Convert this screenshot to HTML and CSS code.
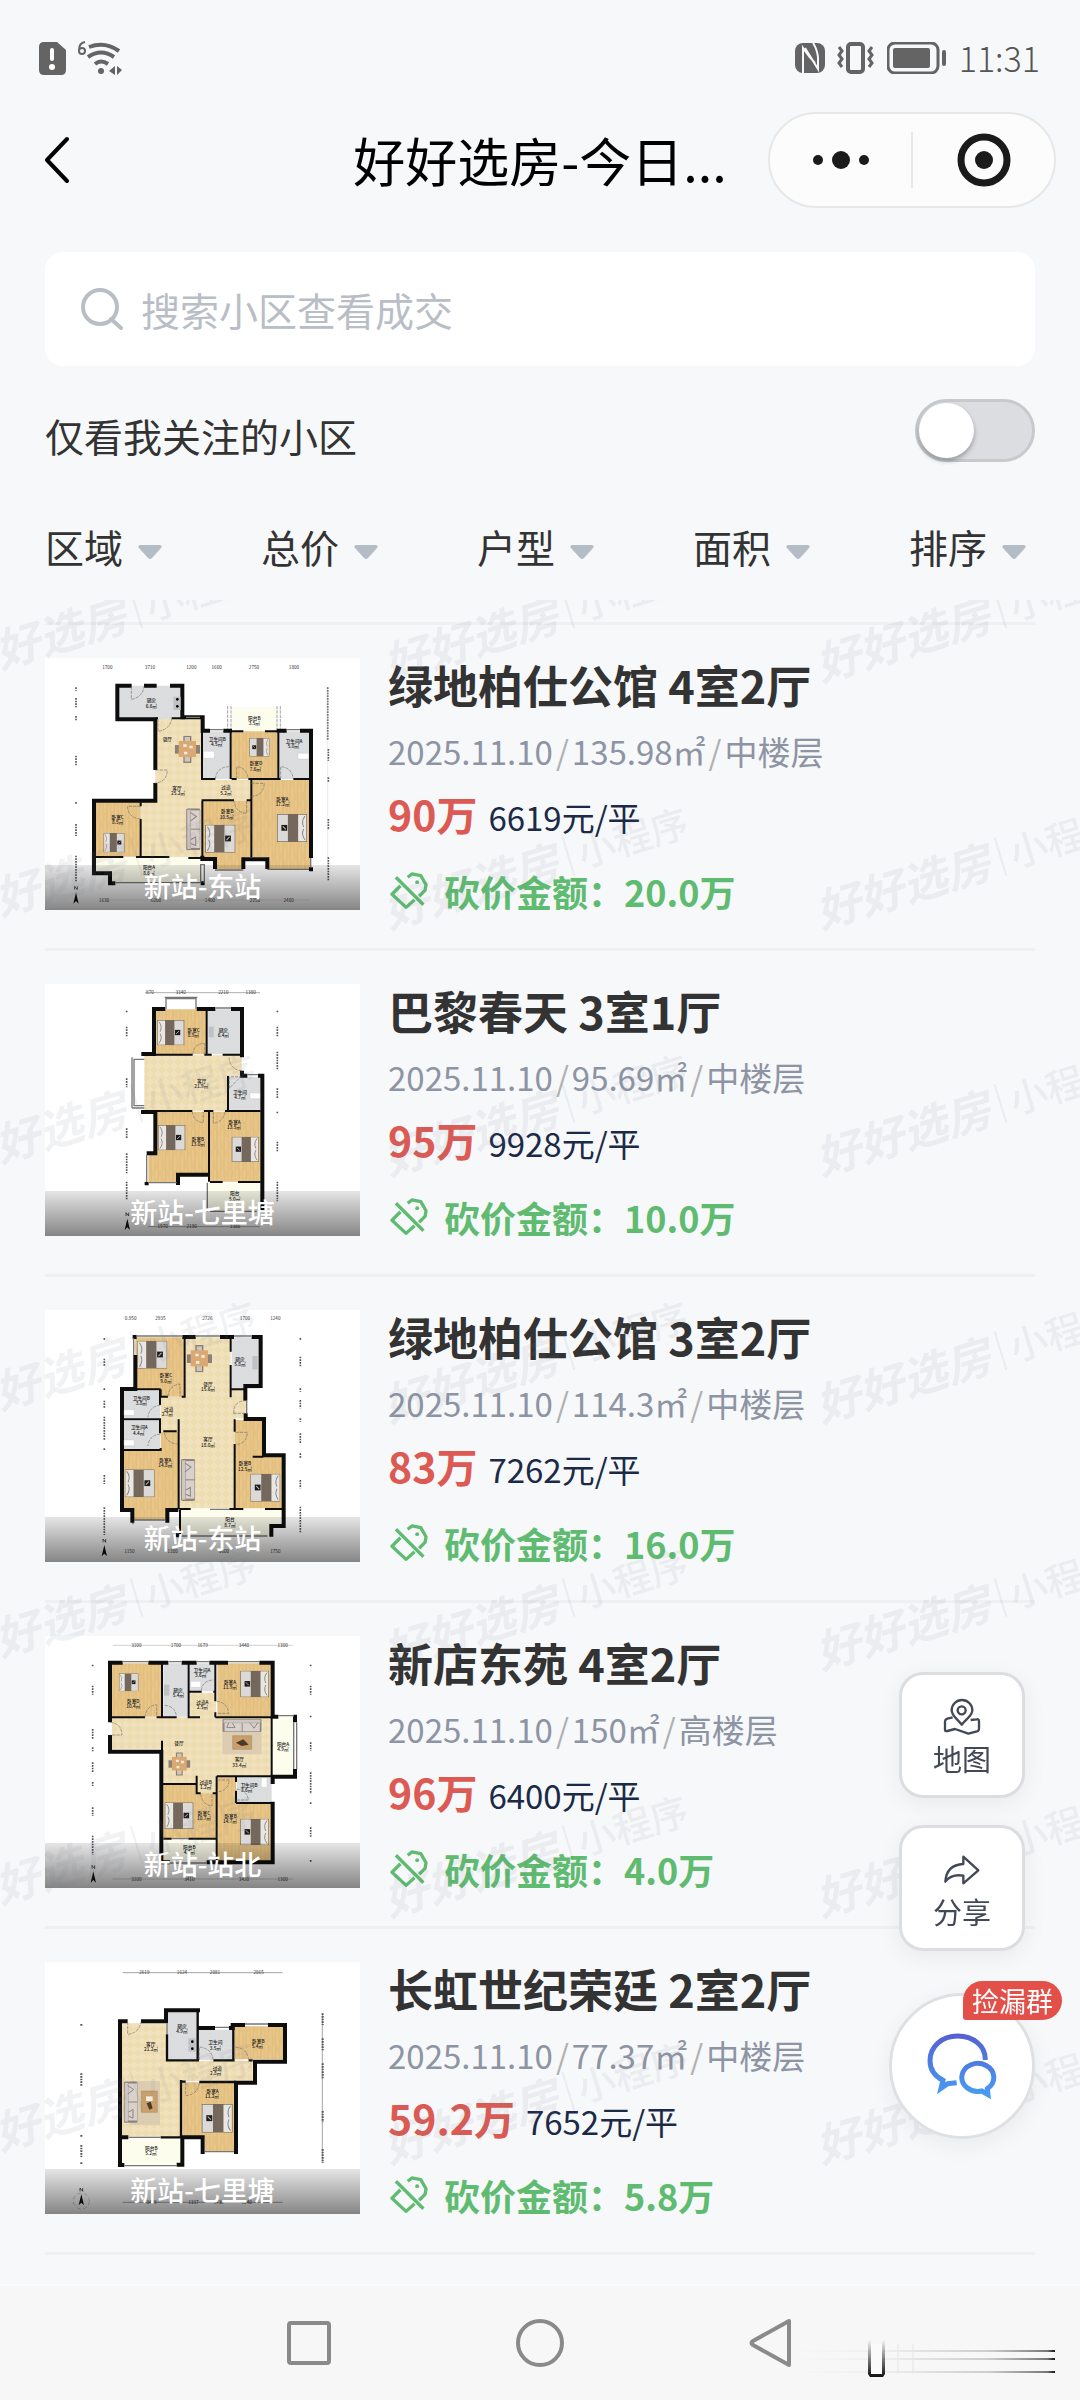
FILE: index.html
```html
<!DOCTYPE html>
<html lang="zh-CN">
<head>
<meta charset="utf-8">
<meta name="viewport" content="width=device-width, initial-scale=1">
<title>好好选房</title>
<link rel="stylesheet" href="styles.css">
</head>
<body>
<svg class="defs" width="0" height="0" aria-hidden="true">
  <defs>
    <pattern id="wood" width="22" height="60" patternUnits="userSpaceOnUse"><rect width="22" height="60" fill="#e6c384"/><path d="M0 0V60M11 0V60" stroke="#dcb672" stroke-width="2"/><path d="M5 0V34M16 20V60" stroke="#edcf98" stroke-width="2"/></pattern>
    <pattern id="tile" width="12" height="12" patternUnits="userSpaceOnUse"><rect width="12" height="12" fill="#dcdddf"/><path d="M0 0H12M0 0V12" stroke="#cfd1d4"/></pattern>
    <pattern id="stone" width="24" height="24" patternUnits="userSpaceOnUse"><rect width="24" height="24" fill="#f1e2bd"/><path d="M0 12L12 0L24 12L12 24Z" fill="#eedcb1"/></pattern>
    <linearGradient id="chat" x1="0" y1="1190" x2="0" y2="1385" gradientUnits="userSpaceOnUse"><stop offset="0" stop-color="#5560d2"/><stop offset="1" stop-color="#46a0f5"/></linearGradient>
  </defs>
  <symbol id="bed" viewBox="0 0 88 82"><rect width="88" height="82" fill="#74675c"/><rect x="2" y="2" width="24" height="78" fill="#e9e7e4"/><path d="M6 6Q18 20 10 38M6 76Q18 60 10 44" stroke="#8d8983" stroke-width="3" fill="none"/><rect x="56" y="2" width="30" height="78" fill="#dcdad8"/><rect x="58" y="32" width="17" height="17" fill="#1d1b1a"/><path d="M62 45L71 36" stroke="#bbb" stroke-width="3"/></symbol>
  <symbol id="sofa" viewBox="0 0 42 124"><rect width="42" height="124" rx="5" fill="#8f8580"/><rect x="3" y="4" width="10" height="116" fill="#cfc7c2"/><rect x="14" y="6" width="26" height="54" fill="#d9d1cc"/><rect x="14" y="63" width="26" height="54" fill="#d9d1cc"/><path d="M12 12L30 24L12 38M14 92L28 84L28 110L14 104" stroke="#8d8480" stroke-width="3" fill="none"/></symbol>
  <symbol id="dining" viewBox="0 0 76 82"><rect x="26" y="0" width="24" height="82" fill="#8c8176"/><rect x="0" y="28" width="76" height="26" fill="#8c8176"/><rect x="30" y="4" width="16" height="74" fill="#cfc5b8"/><rect x="12" y="16" width="52" height="48" fill="#d9a971"/><path d="M26 26h10v8h-10zM44 30h10v8h-10zM28 48h10v8h-10z" fill="#f4ede2"/></symbol>
  <symbol id="compass" viewBox="0 0 20 60"><path d="M10 20L18 54L10 46L2 54Z" fill="#111"/><path d="M6 12V2L14 12V2" fill="none" stroke="#111" stroke-width="2"/></symbol>
  <symbol id="cut" viewBox="58 696 116 116"><path d="M112 712L125 702L152 707L168 735L165 752L147 770M90 738L64 764L107 804L133 781M76 712L160 796" fill="none" stroke="#5fbb70" stroke-width="10" stroke-linejoin="round"/><circle cx="141" cy="727" r="6" fill="#5fbb70"/></symbol>
  <symbol id="arrow" viewBox="0 0 24 14"><path d="M2 0H22Q25 1 23 3L14 13Q12 15 10 13L1 3Q-1 1 2 0Z" fill="#b4bdc5"/></symbol>
</svg>

<div class="status">
  <div class="status-group">
    <svg width="27" height="33" viewBox="0 0 27 33"><path d="M5 0H18L27 8V28Q27 33 22 33H5Q0 33 0 28V5Q0 0 5 0Z" fill="#646464"/><path d="M13 8V17" stroke="#fff" stroke-width="4" stroke-linecap="round"/><circle cx="13" cy="25" r="3" fill="#fff"/></svg>
    <svg width="46" height="34" viewBox="0 0 46 34"><g fill="none" stroke="#646464"><path d="M7 1Q1 2 1 9M1 10a3 3 0 1 0 6 0a3 3 0 1 0-6 0" stroke-width="2"/><path d="M11 6Q27 0 41 10M10 16Q23 7 36 16M17 23Q23 18 30 23" stroke-width="4"/></g><circle cx="23" cy="30" r="3" fill="#646464"/><path d="M37 25V34L31 30ZM39 25V34L44 29Z" fill="#646464"/></svg>
  </div>
  <div class="status-group">
    <svg width="30" height="30" viewBox="0 0 30 30"><rect width="30" height="30" rx="8" fill="#646464"/><path d="M8 30V5Q14 14 20 20M10 5L23 26V14Q22 6 18 0" fill="none" stroke="#f7f8fa" stroke-width="2"/></svg>
    <svg width="38" height="32" viewBox="0 0 38 32"><rect x="11" y="2" width="15" height="28" rx="3" fill="none" stroke="#646464" stroke-width="4"/><path d="M2 5L5 9L2 13L5 17L2 21L5 25M35 5L32 9L35 13L32 17L35 21L32 25" fill="none" stroke="#646464" stroke-width="3"/></svg>
    <svg width="60" height="32" viewBox="0 0 60 32"><rect x="1" y="1" width="50" height="30" rx="7" fill="none" stroke="#646464" stroke-width="3"/><rect x="6" y="6" width="37" height="20" rx="2" fill="#646464"/><path d="M57 10V22" stroke="#646464" stroke-width="4" stroke-linecap="round"/></svg>
    <span class="clock">11:31</span>
  </div>
</div>

<header class="titlebar">
  <button class="back" aria-label="返回"><svg width="26" height="48" viewBox="0 0 26 48"><path d="M23 3L3 24L23 45" fill="none" stroke="#000" stroke-width="4" stroke-linecap="round" stroke-linejoin="round"/></svg></button>
  <h1>好好选房-今日...</h1>
  <div class="capsule">
    <button aria-label="更多"><svg width="58" height="20" viewBox="0 0 58 20" fill="#1b1b1b"><circle cx="6" cy="10" r="5"/><circle cx="29" cy="10" r="9"/><circle cx="52" cy="10" r="5"/></svg></button>
    <button aria-label="关闭"><svg width="54" height="54" viewBox="0 0 54 54"><circle cx="27" cy="27" r="23" fill="none" stroke="#1b1b1b" stroke-width="7"/><circle cx="27" cy="27" r="9" fill="#1b1b1b"/></svg></button>
  </div>
</header>

<main>
  <label class="search">
    <svg width="42" height="42" viewBox="0 0 42 42" fill="none" stroke="#b9bec6" stroke-width="4"><circle cx="19" cy="19" r="17"/><path d="M30 31L40 40" stroke-linecap="round"/></svg>
    <input type="search" placeholder="搜索小区查看成交" aria-label="搜索小区查看成交">
  </label>
  <div class="follow">
    <label for="only">仅看我关注的小区</label>
    <input id="only" class="switch" type="checkbox" role="switch">
  </div>
  <div class="filters">
    <label><select aria-label="区域"><option>区域</option></select><svg width="24" height="14"><use href="#arrow"/></svg></label>
    <label><select aria-label="总价"><option>总价</option></select><svg width="24" height="14"><use href="#arrow"/></svg></label>
    <label><select aria-label="户型"><option>户型</option></select><svg width="24" height="14"><use href="#arrow"/></svg></label>
    <label><select aria-label="面积"><option>面积</option></select><svg width="24" height="14"><use href="#arrow"/></svg></label>
    <label><select aria-label="排序"><option>排序</option></select><svg width="24" height="14"><use href="#arrow"/></svg></label>
  </div>

  <section class="results">
    <ul class="list">
      <li class="item">
        <figure class="thumb">
          <svg viewBox="45 52 945 756" class="plan">
            <path d="M262 135H458V235H262Z" fill="url(#tile)"/><path d="M376 235H515V418H662V480H515V650H332V482H376Z" fill="url(#stone)"/>
            <path d="M518 272H602V415H518ZM746 272H840V415H746Z" fill="url(#tile)"/><path d="M605 200H743V272H605ZM197 650H517V725H240V695H197Z" fill="#fcfdec"/>
            <path d="M605 272H743V415H605ZM664 418H842V685H712V650H664ZM517 480H662V650H645V685H555V650H517ZM197 485H332V648H197Z" fill="url(#wood)"/>
            <path d="M262 241V135H305M342 135H380M420 135H457V230H518V270H540M257 236H376V388M376 427V480H192V698H240V728H256M580 270H606M740 270H770M810 270H843V652M517 645V655H555V685M640 685V656H712V685M837 686H849M512 728H524" fill="none" stroke="#0d0d0d" stroke-width="12"/>
            <path d="M376 233H384M425 233H466M516 270V415H556M602 270V415M605 415H620M655 415H745V275M745 415H752M790 415H840M664 418V650M517 480V650M515 479H612M650 479H664M332 485V497M332 535V648M192 649H280M318 649H418M475 652H520M605 272H640M705 272H745" fill="none" stroke="#0d0d0d" stroke-width="6"/>
            <path d="M256 726H512V672H523V728M555 688H640M712 686H837M842 652V680M468 230H510M540 267H580M770 267H810" fill="none" stroke="#777" stroke-width="4"/>
            <path d="M304 137V176Q338 170 342 137M384 235V272Q420 266 425 235M376 388H412Q410 425 376 427M556 415Q560 380 596 378M620 415V378Q650 380 655 415M752 415V378Q785 380 790 415M664 428H703Q700 465 664 467M332 497H292Q295 532 332 535M650 480V518Q616 516 612 480M593 196V265M603 196V265M741 196V265M751 196V265" fill="none" stroke="#777" stroke-width="2" stroke-dasharray="10 3"/>
            <use href="#dining" x="434" y="285" width="76" height="82"/><use href="#sofa" x="468" y="503" width="44" height="126"/><use href="#bed" x="525" y="552" width="92" height="84"/>
            <use href="#bed" transform="translate(832 520) scale(-1 1)" width="92" height="84"/><use href="#bed" x="203" y="577" width="98" height="58"/><use href="#bed" transform="translate(738 292) scale(-1 1)" width="100" height="56"/>
            <path d="M521 332H553V353H521ZM804 338H836V355H804Z" fill="#fff" stroke="#bbb"/><path d="M430 168H452V208H430Z" fill="#bfc1c4"/><circle cx="442" cy="176" r="4"/><circle cx="442" cy="197" r="4"/>
            <g class="room"><text x="364" y="184">厨房</text><text x="364" y="201">6.6㎡</text><text x="412" y="302">餐厅</text><text x="441" y="447">客厅</text><text x="444" y="464">25.2㎡</text><text x="588" y="445">过道</text><text x="588" y="462">5.2㎡</text><text x="673" y="237">阳台B</text><text x="673" y="253">3.5㎡</text><text x="562" y="301">卫生间B</text><text x="560" y="317">4.5㎡</text><text x="678" y="374">卧室D</text><text x="676" y="390">7.6㎡</text><text x="792" y="306">卫生间A</text><text x="790" y="323">5.0㎡</text><text x="757" y="480">卧室A</text><text x="758" y="497">17.2㎡</text><text x="592" y="518">卧室B</text><text x="590" y="534">10.5㎡</text><text x="263" y="534">卧室C</text><text x="263" y="551">8.5㎡</text><text x="357" y="686">阳台A</text><text x="357" y="702">8.6㎡</text></g>
            <g class="dim"><text x="232" y="85">1700</text><text x="360" y="85">3710</text><text x="484" y="85">1200</text><text x="560" y="85">1600</text><text x="672" y="85">2750</text><text x="792" y="85">1800</text><text x="222" y="783">1630</text><text x="378" y="783">6200</text><text x="540" y="783">1400</text><text x="675" y="783">2250</text><text x="776" y="783">2480</text></g>
            <path d="M138 140V150M138 172V200M138 226V242M138 345V376M138 484V492M138 550V586M138 645V725M893 140V300M895 325V360M895 410V424M895 535V568M895 650V720" fill="none" stroke="#555" stroke-width="5" stroke-dasharray="5 3"/><path d="M893 140V720M230 778H840" stroke="#bbb" stroke-width="1"/>
            <use href="#compass" x="128" y="735" width="20" height="60"/>
          </svg>
          <figcaption>新站-东站</figcaption>
        </figure>
        <div class="info">
          <h2>绿地柏仕公馆 4室2厅</h2>
          <p class="meta"><span>2025.11.10</span><i>/</i><span>135.98㎡</span><i>/</i><span>中楼层</span></p>
          <p class="price"><strong>90万</strong><span>6619元/平</span></p>
          <p class="bargain"><svg width="38" height="38"><use href="#cut"/></svg><span>砍价金额：20.0万</span></p>
        </div>
      </li>
      <li class="item">
        <figure class="thumb">
          <svg viewBox="45 42 945 756" class="plan">
            <path d="M372 118H528V253H372ZM380 425H535V610H440V637H355V555H380ZM540 425H692V635H540Z" fill="url(#wood)"/><path d="M533 118H635V253H533ZM595 320H692V422H595Z" fill="url(#tile)"/>
            <path d="M343 256H635V318H595V422H343Z" fill="url(#stone)"/><path d="M535 638H692V722H535Z" fill="#fcfdec"/>
            <path d="M372 258V117H406M500 117H556M603 117H636V262M343 252H373M334 252H345M636 302V317H652M684 317H697V722M333 426H376V550H350M350 636V646M444 645V614H535" fill="none" stroke="#0d0d0d" stroke-width="12"/>
            <path d="M530 115V252M372 254H488M523 254H545M578 254H636M594 318V422M345 423H487M522 423H550M585 423H692M537 423V635M540 636H578M624 636H692" fill="none" stroke="#0d0d0d" stroke-width="6"/>
            <path d="M408 117V86H498V117M404 82H502M343 268H312V407H343M306 414H343M306 262V414M350 555V636M355 638H440M532 638V725M540 724H680M556 114H603M652 314H684" fill="none" stroke="#777" stroke-width="4"/>
            <path d="M488 254Q490 222 523 220V254M597 262Q600 300 636 302M487 425Q490 455 520 458V425M550 425V460Q580 455 585 425M598 355V320H632Z" fill="none" stroke="#777" stroke-width="2" stroke-dasharray="10 3"/>
            <use href="#bed" x="379" y="150" width="86" height="76"/><use href="#bed" x="382" y="465" width="86" height="76"/><use href="#bed" transform="translate(689 500) scale(-1 1)" width="86" height="76"/>
            <path d="M536 170H551V202H536Z" fill="#bfc1c4"/><path d="M660 369H690V386H660Z" fill="#fff" stroke="#bbb"/>
            <g class="room"><text x="491" y="186">卧室C</text><text x="490" y="202">8.9㎡</text><text x="580" y="186">厨房</text><text x="580" y="202">6.4㎡</text><text x="515" y="339">客厅</text><text x="514" y="355">21.9㎡</text><text x="630" y="371">卫生间</text><text x="630" y="387">4.7㎡</text><text x="504" y="513">卧室B</text><text x="504" y="529">13.0㎡</text><text x="614" y="462">卧室A</text><text x="612" y="478">13.5㎡</text><text x="614" y="676">阳台</text><text x="614" y="692">5.0㎡</text></g>
            <path d="M345 68H690M355 770H690" stroke="#888" stroke-width="2"/><g class="dim"><text x="360" y="73">870</text><text x="452" y="73">3340</text><text x="580" y="73">2210</text><text x="662" y="73">1380</text><text x="398" y="775">1970</text><text x="485" y="775">2190</text><text x="615" y="775">3380</text></g>
            <path d="M290 122V128M290 170V200M290 325V352M290 475V504M290 550V610M290 635V690M742 122V128M742 170V200M742 245V300M742 355V386M742 425V430M742 515V545M742 635V694" fill="none" stroke="#555" stroke-width="5" stroke-dasharray="5 3"/>
            <use href="#compass" x="282" y="726" width="20" height="60"/>
          </svg>
          <figcaption>新站-七里塘</figcaption>
        </figure>
        <div class="info">
          <h2>巴黎春天 3室1厅</h2>
          <p class="meta"><span>2025.11.10</span><i>/</i><span>95.69㎡</span><i>/</i><span>中楼层</span></p>
          <p class="price"><strong>95万</strong><span>9928元/平</span></p>
          <p class="bargain"><svg width="38" height="38"><use href="#cut"/></svg><span>砍价金额：10.0万</span></p>
        </div>
      </li>
      <li class="item">
        <figure class="thumb">
          <svg viewBox="45 60 945 756" class="plan">
            <path d="M316 142H465V320H392V298H316ZM276 482H392V425H445V658H412V690H305V658H276ZM615 390H700V500H758V655H615Z" fill="url(#wood)"/><path d="M605 142H690V296H605ZM281 302H390V385H281ZM281 392H390V478H281Z" fill="url(#tile)"/>
            <path d="M468 142H602V298H648V385H615V655H448V425H392V320H468Z" fill="url(#stone)"/><path d="M450 658H758V710H720V738H450Z" fill="#fcfdec"/>
            <path d="M308 141H320M316 195V297H276V660H307V698M308 697H310M412 698V660H445M457 141H497M570 141H612M665 141H692V288H646V332M647 370V387H702V496H761V708H724V740M444 730V742" fill="none" stroke="#0d0d0d" stroke-width="12"/>
            <path d="M464 142V320H455M392 298V320H414M392 298H316M602 142V185M602 225V322M602 298H648M281 388H390M390 298V345M390 385V430M281 480H392V474M446 388V658M400 424H440M614 388V425M614 462V655M448 657H482M598 657H640M705 657H758M668 500H700M450 660V738" fill="none" stroke="#0d0d0d" stroke-width="6"/>
            <path d="M320 138H457M311 145V195M497 138H570M612 138H665M312 690H405M450 738H712M540 658H598M650 332V370" fill="none" stroke="#777" stroke-width="4"/>
            <path d="M414 320Q416 286 450 282V320M392 345Q356 350 354 382M392 432Q356 436 354 468M403 427Q408 460 443 462M612 370Q608 335 646 332M610 370H648M616 427H652Q650 462 616 464" fill="none" stroke="#777" stroke-width="2" stroke-dasharray="10 3"/>
            <use href="#bed" x="322" y="152" width="90" height="84"/><use href="#bed" x="284" y="538" width="90" height="84"/><use href="#bed" transform="translate(751 551) scale(-1 1)" width="90" height="84"/><use href="#dining" x="470" y="165" width="76" height="82"/><use href="#sofa" x="452" y="507" width="44" height="126"/>
            <path d="M667 198H683V238H667Z" fill="#bfc1c4"/><path d="M282 359H313V376H282ZM282 450H313V467H282Z" fill="#fff" stroke="#bbb"/>
            <g class="room"><text x="408" y="262">卧室C</text><text x="408" y="278">9.0㎡</text><text x="630" y="212">厨房</text><text x="630" y="228">5.8㎡</text><text x="534" y="288">餐厅</text><text x="534" y="304">15.6㎡</text><text x="334" y="329">卫生间B</text><text x="334" y="345">3.8㎡</text><text x="416" y="363">过道</text><text x="412" y="379">2.7㎡</text><text x="328" y="418">卫生间A</text><text x="326" y="434">4.4㎡</text><text x="534" y="453">客厅</text><text x="534" y="470">18.0㎡</text><text x="406" y="516">卧室A</text><text x="406" y="532">14.8㎡</text><text x="645" y="526">卧室B</text><text x="645" y="542">12.5㎡</text><text x="600" y="694">阳台</text><text x="600" y="710">8.7㎡</text></g>
            <g class="dim"><text x="302" y="91">0.950</text><text x="391" y="91">2935</text><text x="532" y="91">2726</text><text x="645" y="91">1700</text><text x="736" y="91">1240</text><text x="298" y="790">1150</text><text x="428" y="790">1380</text><text x="582" y="790">3600</text><text x="736" y="790">1750</text></g>
            <path d="M223 144V150M223 206V230M223 295V302M223 332V354M223 380V450M223 475V482M223 555V582M223 652V735M811 144V150M811 200V230M811 295V305M811 330V355M811 385V395M811 430V460M811 490V505M811 570V595M811 650V728" fill="none" stroke="#555" stroke-width="5" stroke-dasharray="5 3"/>
            <use href="#compass" x="213" y="745" width="20" height="60"/>
          </svg>
          <figcaption>新站-东站</figcaption>
        </figure>
        <div class="info">
          <h2>绿地柏仕公馆 3室2厅</h2>
          <p class="meta"><span>2025.11.10</span><i>/</i><span>114.3㎡</span><i>/</i><span>中楼层</span></p>
          <p class="price"><strong>83万</strong><span>7262元/平</span></p>
          <p class="bargain"><svg width="38" height="38"><use href="#cut"/></svg><span>砍价金额：16.0万</span></p>
        </div>
      </li>
      <li class="item">
        <figure class="thumb">
          <svg viewBox="45 46 945 756" class="plan">
            <path d="M246 128H395V288H246ZM562 128H725V288H562ZM400 493H558V652H400ZM562 468H618V546H725V722H562Z" fill="url(#wood)"/><path d="M400 128H475V288H400ZM480 128H556V212H480ZM620 470H725V545H620Z" fill="url(#tile)"/>
            <path d="M246 290H480V216H558V290H722V465H558V518H500V490H400V385H246Z" fill="url(#stone)"/><path d="M727 288H795V462H727ZM400 656H558V722H400Z" fill="#fcfdec"/>
            <path d="M240 305V126H278M355 126H415M455 126H500M538 126H594M688 126H728V288H745M790 288H795V305M240 343V393H394V725H420M530 725H728V543M728 490V468H795V445" fill="none" stroke="#0d0d0d" stroke-width="12"/>
            <path d="M396 126V290H440M246 290H345M380 290H404M476 126V290H510M478 213H515M556 126V242M556 290V275M556 213H550M556 290H725M725 290V465M396 360V490H500V465M500 490V518H512M548 518H560M560 467H728M560 467V722M618 470V484M618 547H725M618 510V547M400 654H425M475 654H558" fill="none" stroke="#0d0d0d" stroke-width="6"/>
            <path d="M278 123H355M415 123H455M500 123H538M594 123H688M745 285H790M791 305V445M800 305V445M420 727H530M425 654H475" fill="none" stroke="#777" stroke-width="4"/>
            <path d="M345 290Q348 255 380 252V290M404 254Q436 256 440 290M240 305Q275 308 276 343H240M514 210Q516 180 550 178M560 242Q592 245 596 278H560M512 520Q516 552 546 556V520M562 478H598Q595 510 562 514M620 538H655Q652 510 620 505" fill="none" stroke="#777" stroke-width="2" stroke-dasharray="10 3"/>
            <use href="#bed" x="248" y="158" width="96" height="54"/><use href="#bed" transform="translate(718 150) scale(-1 1)" width="88" height="80"/><use href="#bed" x="402" y="545" width="90" height="80"/><use href="#bed" transform="translate(718 594) scale(-1 1)" width="88" height="80"/>
            <path d="M577 295H695V401H577Z" fill="#dccdb2"/><use href="#sofa" transform="translate(695 294) rotate(90)" width="40" height="118"/><path d="M608 345H665V386H608Z" fill="#c9a06c" stroke="#8c6c42"/><path d="M618 366L640 356L656 372L635 376Z" fill="#4b3a27"/><use href="#dining" x="410" y="395" width="76" height="70"/>
            <path d="M402 192H418V225H402Z" fill="#bfc1c4"/><path d="M482 182H512V200H482ZM694 472H711V500H694Z" fill="#fff" stroke="#bbb"/>
            <g class="room"><text x="310" y="247">卧室D</text><text x="310" y="263">10.4㎡</text><text x="444" y="213">厨房</text><text x="445" y="229">5.4㎡</text><text x="516" y="154">卫生间A</text><text x="512" y="170">3.6㎡</text><text x="517" y="249">过道A</text><text x="517" y="265">2.5㎡</text><text x="600" y="190">卧室A</text><text x="600" y="206">11.9㎡</text><text x="447" y="372">餐厅</text><text x="628" y="422">客厅</text><text x="628" y="438">33.4㎡</text><text x="759" y="375">阳台A</text><text x="759" y="391">4.9㎡</text><text x="527" y="490">过道B</text><text x="527" y="506">1.2㎡</text><text x="657" y="498">卫生间B</text><text x="650" y="514">3.6㎡</text><text x="522" y="582">卧室C</text><text x="522" y="598">10.7㎡</text><text x="602" y="592">卧室B</text><text x="600" y="608">14.7㎡</text><text x="478" y="685">阳台B</text><text x="478" y="701">4.7㎡</text></g>
            <path d="M248 74H788M248 775H788" stroke="#bbb" stroke-width="2"/><g class="dim"><text x="319" y="79">3100</text><text x="438" y="79">1700</text><text x="518" y="79">1679</text><text x="642" y="79">3440</text><text x="758" y="79">1300</text><text x="319" y="780">3100</text><text x="478" y="780">3410</text><text x="642" y="780">3420</text><text x="758" y="780">1300</text></g>
            <path d="M188 132V138M188 195V222M188 325V355M188 380V392M188 425V455M188 484V496M188 560V586M188 645V702M842 132V138M842 195V222M842 285V290M842 365V390M842 455V520M842 545V550M842 620V648M842 718V725" fill="none" stroke="#555" stroke-width="5" stroke-dasharray="5 3"/>
            <use href="#compass" x="180" y="732" width="20" height="60"/>
          </svg>
          <figcaption>新站-站北</figcaption>
        </figure>
        <div class="info">
          <h2>新店东苑 4室2厅</h2>
          <p class="meta"><span>2025.11.10</span><i>/</i><span>150㎡</span><i>/</i><span>高楼层</span></p>
          <p class="price"><strong>96万</strong><span>6400元/平</span></p>
          <p class="bargain"><svg width="38" height="38"><use href="#cut"/></svg><span>砍价金额：4.0万</span></p>
        </div>
      </li>
      <li class="item">
        <figure class="thumb">
          <svg viewBox="45 51 945 756" class="plan">
            <path d="M275 235H412V348H668V408H455V575H275Z" fill="url(#stone)"/><path d="M412 202H502V345H412ZM503 254H608V345H503Z" fill="url(#tile)"/><path d="M614 244H760V343H614ZM457 412H614V618H525V577H457Z" fill="url(#wood)"/><path d="M275 578H452V658H275Z" fill="#fcfdec"/>
            <path d="M293 229H270V660H283M333 229H408V196H510M502 249H555M597 249H608V240H645M714 240H765V350H675V413H618V627M270 577H295M440 659H457V577H518V627" fill="none" stroke="#0d0d0d" stroke-width="12"/>
            <path d="M411 268V346H507M503 196V345M550 346H614M610 245V346M656 346H668M453 405V577M453 410H467M508 411H618M392 577H457" fill="none" stroke="#0d0d0d" stroke-width="7"/>
            <path d="M411 235V268M555 247H597M645 237H714M525 620H612M283 662H440M295 577H392" fill="none" stroke="#777" stroke-width="4"/>
            <path d="M293 230V268Q328 264 333 230M508 345V306Q545 310 550 345M616 306Q652 310 656 345M467 412V452Q505 448 508 412" fill="none" stroke="#777" stroke-width="2" stroke-dasharray="10 3"/>
            <path d="M300 408H390V540H300Z" fill="#dccdb2"/><use href="#sofa" x="281" y="408" width="42" height="127"/><path d="M334 438H382V502H334Z" fill="#c9a06c" stroke="#8c6c42"/><path d="M348 454H368V468H348Z" fill="#f2ece2"/><path d="M350 475L362 470L368 490L358 494Z" fill="#4b3a27"/>
            <use href="#bed" transform="translate(610 477) scale(-1 1)" width="97" height="86"/><path d="M475 280H497V320H475Z" fill="#bfc1c4"/><circle cx="487" cy="290" r="4"/><circle cx="487" cy="311" r="4"/>
            <g class="room"><text x="362" y="302">客厅</text><text x="363" y="319">21.2㎡</text><text x="456" y="249">厨房</text><text x="456" y="265">4.9㎡</text><text x="556" y="298">卫生间</text><text x="556" y="314">3.5㎡</text><text x="685" y="293">卧室B</text><text x="682" y="309">5.4㎡</text><text x="562" y="375">过道</text><text x="557" y="391">2.8㎡</text><text x="548" y="444">卧室A</text><text x="546" y="460">11.2㎡</text><text x="364" y="614">阳台B</text><text x="363" y="631">5.2㎡</text></g>
            <path d="M278 83H758M278 772H758M877 205V650" stroke="#777" stroke-width="2"/><g class="dim"><text x="343" y="88">2619</text><text x="456" y="88">1624</text><text x="555" y="88">2081</text><text x="686" y="88">2865</text><text x="364" y="777">3449</text><text x="490" y="777">1337</text><text x="566" y="777">1739</text><text x="650" y="777">1240</text></g>
            <path d="M154 237V242M154 385V425M154 570V578M154 600V636M154 652V658M878 205V240M878 280V316M878 355V400M878 498V532M878 612V654" fill="none" stroke="#555" stroke-width="6" stroke-dasharray="5 3"/>
            <circle cx="154" cy="768" r="24" fill="none" stroke="#666" stroke-dasharray="12 8"/><use href="#compass" x="144" y="725" width="20" height="64"/>
          </svg>
          <figcaption>新站-七里塘</figcaption>
        </figure>
        <div class="info">
          <h2>长虹世纪荣廷 2室2厅</h2>
          <p class="meta"><span>2025.11.10</span><i>/</i><span>77.37㎡</span><i>/</i><span>中楼层</span></p>
          <p class="price"><strong>59.2万</strong><span>7652元/平</span></p>
          <p class="bargain"><svg width="38" height="38"><use href="#cut"/></svg><span>砍价金额：5.8万</span></p>
        </div>
      </li>
    </ul>
    <svg class="watermark" aria-hidden="true">
      <defs><pattern id="mark" x="-114" y="-103" width="432" height="247" patternUnits="userSpaceOnUse"><g transform="translate(216 123) rotate(-17)"><text class="mark-name" x="-156" y="17">好好选房</text><path d="M36 -20V20" stroke="#70788a" stroke-width="2"/><text class="mark-kind" x="46" y="15">小程序</text></g></pattern></defs>
      <rect width="100%" height="100%" fill="url(#mark)"/>
    </svg>
  </section>
</main>

<aside class="float">
  <button class="tool"><svg width="38" height="38" viewBox="249 172 114 110" fill="none" stroke="#434857" stroke-width="7" stroke-linejoin="round"><path d="M305 250C292 232 275 224 275 207A30 30 0 0 1 337 207C337 224 319 232 305 250Z"/><circle cx="305" cy="207" r="12"/><path d="M278 228L262 232Q255 235 255 240V265Q255 271 262 269L285 263L325 277L351 270Q357 268 357 262V240Q357 233 350 234L332 236"/></svg>地图</button>
  <button class="tool"><svg width="38" height="38" viewBox="249 619 114 114" fill="none" stroke="#434857" stroke-width="7" stroke-linejoin="round"><path d="M310 636L355 677L310 716V693C285 689 268 695 256 711C258 680 275 660 310 658Z"/></svg>分享</button>
  <button class="group"><svg width="70" height="66" viewBox="202 1187 210 198" fill="none" stroke="url(#chat)" stroke-width="15"><path d="M377 1268C378 1225 340 1196 294 1196C246 1196 211 1228 211 1270C211 1297 225 1316 250 1329L244 1353L264 1339Q276 1338 291 1336"/><path d="M383 1354A48 42 0 1 0 366 1361L385 1372Z"/></svg><span class="badge">捡漏群</span></button>
</aside>

<nav class="sysbar">
  <button aria-label="最近任务"><svg width="46" height="46" viewBox="0 0 46 46"><rect x="3" y="3" width="40" height="40" rx="2" fill="none" stroke="#8a8a8a" stroke-width="4"/></svg></button>
  <button aria-label="主屏幕"><svg width="50" height="50" viewBox="0 0 50 50"><circle cx="25" cy="25" r="22" fill="none" stroke="#8a8a8a" stroke-width="4"/></svg></button>
  <button aria-label="返回上一页"><svg width="46" height="50" viewBox="0 0 46 50"><path d="M41 3V47L5 27Q2 25 5 23Z" fill="none" stroke="#8a8a8a" stroke-width="4" stroke-linejoin="round"/></svg></button>
  <svg class="smear" width="262" height="38" viewBox="0 0 262 38" aria-hidden="true">
    <defs><linearGradient id="fade" x1="0" x2="1" y1="0" y2="0"><stop offset="0" stop-color="#222" stop-opacity="0"/><stop offset=".35" stop-color="#222" stop-opacity=".04"/><stop offset=".75" stop-color="#222" stop-opacity=".2"/><stop offset=".97" stop-color="#222" stop-opacity=".6"/><stop offset="1" stop-color="#111"/></linearGradient><linearGradient id="drop" x1="0" x2="0" y1="0" y2="1"><stop offset="0" stop-opacity="0"/><stop offset="1" stop-color="#111"/></linearGradient></defs>
    <path d="M0 10H261V12H0ZM0 18H261V20H0ZM0 31H261V33H0Z" fill="url(#fade)"/><path d="M76 4H89V34H76Z" fill="#fafafa"/><path d="M74 0H77V34H88V0H91V34L89 37H76L74 34Z" fill="url(#drop)"/><path d="M104 4V34M119 4V34" stroke="#e4e4e4"/>
  </svg>
</nav>
</body>
</html>
```
FILE: styles.css
```css
* { box-sizing: border-box; }

body {
  margin: 0;
  min-height: 100vh;
  display: flex;
  flex-direction: column;
  background: #f7f8fa;
  color: #333;
  font-family: "Noto Sans CJK SC", "Noto Sans", sans-serif;
}

h1, h2, p, ul, figure { margin: 0; padding: 0; }
button, input, select { font: inherit; color: inherit; border: 0; padding: 0; background: none; }
svg { display: block; flex: none; }
.defs { position: absolute; }

.status {
  height: 112px;
  padding: 4px 40px 0 39px;
  display: flex;
  align-items: center;
  justify-content: space-between;
}
.status-group { display: flex; align-items: center; gap: 12px; }
.clock { font-size: 34px; line-height: 40px; font-weight: 300; color: #555; }

.titlebar {
  height: 96px;
  padding: 0 24px;
  display: grid;
  grid-template-columns: 1fr auto 1fr;
  align-items: center;
}
.back { justify-self: start; margin-left: 20px; }
.titlebar h1 { font-size: 52px; line-height: 64px; font-weight: 400; color: #000; }
.capsule {
  justify-self: end;
  width: 288px;
  height: 96px;
  padding: 18px 0;
  display: flex;
  border: 2px solid #e6e7e8;
  border-radius: 48px;
  background: #fcfcfc;
}
.capsule button { flex: 1; display: flex; align-items: center; justify-content: center; }
.capsule button + button { border-left: 2px solid #e6e7e8; }

main { flex: 1; display: flex; flex-direction: column; }

.search {
  margin: 44px 45px 0;
  height: 114px;
  padding: 0 36px;
  display: flex;
  align-items: center;
  gap: 18px;
  border-radius: 18px;
  background: #fff;
}
.search input { flex: 1; min-width: 0; font-size: 39px; line-height: 54px; outline: 0; }
.search input::placeholder { color: #b9bec6; opacity: 1; }

.follow {
  margin: 33px 45px 0;
  display: flex;
  align-items: flex-end;
  justify-content: space-between;
  font-size: 39px;
  line-height: 54px;
}
.switch {
  appearance: none;
  width: 120px;
  height: 63px;
  margin: 0;
  padding: 1px;
  border: 3px solid #c8c9cb;
  border-radius: 32px;
  background: #dcdde1;
}
.switch::before {
  content: "";
  display: block;
  width: 55px;
  height: 55px;
  border-radius: 50%;
  background: #fff;
  box-shadow: 0 3px 5px rgba(0, 0, 0, .3);
}
.switch:checked { background: #5fbb70; }
.switch:checked::before { margin-left: auto; }

.filters {
  padding: 57px 0 27px 45px;
  display: grid;
  grid-template-columns: repeat(5, 20.87%);
  font-size: 39px;
  line-height: 54px;
}
.filters label { display: flex; align-items: center; gap: 15px; }
.filters select { appearance: none; width: 78px; }
.filters svg { margin-top: 12px; }

.results { flex: 1; position: relative; padding: 22px 45px 29px; overflow: hidden; }
.list { list-style: none; border-top: 3px solid #eff0f2; }
.item {
  padding: 33px 0 35px;
  display: flex;
  align-items: flex-start;
  gap: 28px;
  border-bottom: 3px solid #eff0f2;
}
.thumb { position: relative; flex: none; width: 315px; height: 252px; background: #fff; }
.plan { width: 100%; height: 100%; }
.thumb figcaption {
  position: absolute;
  inset: auto 0 0;
  height: 45px;
  background: linear-gradient(rgba(0, 0, 0, .1), rgba(0, 0, 0, .48));
  color: #fff;
  font-size: 27px;
  font-weight: 500;
  line-height: 42px;
  text-align: center;
}
.room { font-size: 14px; font-weight: 500; text-anchor: middle; fill: #222; }
.dim { font-size: 14px; text-anchor: middle; fill: #333; }

.info { flex: 1; min-width: 0; }
.info h2 { font-size: 45px; line-height: 54px; font-weight: 700; }
.info p { height: 44px; line-height: 44px; display: flex; }
.meta { margin-top: 17px; gap: 3px; font-size: 33px; color: #8d94a3; }
.meta i { font-style: normal; color: #b0b0b0; }
.info .price { margin-top: 18px; gap: 11px; align-items: baseline; font-size: 33px; color: #1b2a47; }
.price strong { font-size: 41px; color: #dc5a53; }
.price span { line-height: 34px; }
.info .bargain { margin-top: 34px; gap: 16px; align-items: center; font-size: 36px; font-weight: 700; color: #5fbb70; }
.bargain svg { margin-left: 2px; }

.watermark { position: absolute; inset: 0; width: 100%; height: 100%; pointer-events: none; opacity: .09; }
.mark-name { font-size: 45px; font-weight: 700; font-style: italic; fill: #70788a; }
.mark-kind { font-size: 38px; font-weight: 500; fill: #70788a; }

.float {
  position: fixed;
  right: 45px;
  bottom: 261px;
  display: flex;
  flex-direction: column;
  align-items: center;
}
.tool {
  width: 126px;
  height: 126px;
  margin-bottom: 27px;
  padding: 5px 0 0;
  display: flex;
  flex-direction: column;
  align-items: center;
  justify-content: center;
  gap: 2px;
  border: 3px solid #dcdde0;
  border-radius: 24px;
  background: #fff;
  box-shadow: 0 6px 24px rgba(0, 0, 0, .06);
  font-size: 29px;
  line-height: 40px;
  color: #434857;
}
.group {
  position: relative;
  width: 146px;
  height: 146px;
  margin-top: 15px;
  display: flex;
  align-items: center;
  justify-content: center;
  border: 3px solid #dfe0e4;
  border-radius: 50%;
  background: #fff;
  box-shadow: 0 6px 24px rgba(0, 0, 0, .06);
}
.badge {
  position: absolute;
  top: -15px;
  right: -30px;
  padding: 0 9px;
  border-radius: 20px 20px 20px 3px;
  background: #e35049;
  color: #fff;
  font-size: 27px;
  line-height: 39px;
}

.sysbar {
  position: relative;
  height: 116px;
  display: flex;
  align-items: center;
  justify-content: center;
  gap: 183px;
  background: #f7f7f7;
  border-top: 2px solid #fbfbfc;
}
.smear { position: absolute; right: 24px; bottom: 22px; }
```
